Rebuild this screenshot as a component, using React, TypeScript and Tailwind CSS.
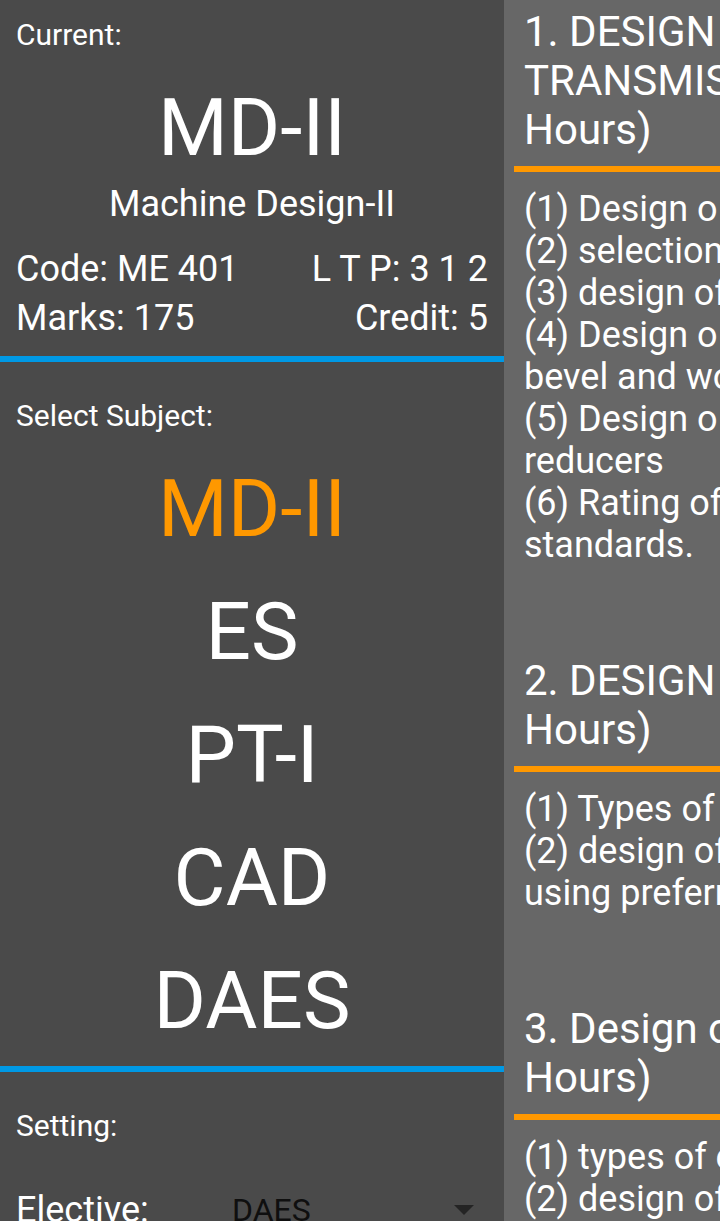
import React from "react";

const subjects = ["MD-II", "ES", "PT-I", "CAD", "DAES"];

const units = [
  {
    title: ["1. DESIGN", "TRANSMISSION", "Hours)"],
    topics: ["(1) Design o", "(2) selection", "(3) design of", "(4) Design o", "bevel and worm", "(5) Design o", "reducers", "(6) Rating of", "standards."],
  },
  {
    title: ["2. DESIGN", "Hours)"],
    topics: ["(1) Types of", "(2) design of", "using preferred"],
  },
  {
    title: ["3. Design of", "Hours)"],
    topics: ["(1) types of engines", "(2) design of"],
  },
];

export default function App() {
  return (
    <div className="flex h-screen overflow-hidden bg-[#676767] font-[Roboto,sans-serif] text-white">
      <aside className="h-full w-[70%] shrink-0 overflow-hidden bg-[#4a4a4a]">
        <section className="border-b-6 border-[#0099e5] px-4 pt-[17px] pb-[13px]">
          <h2 className="text-[30px] leading-9">Current:</h2>
          <h1 className="mt-7 text-center text-[80px] leading-[94px]">MD-II</h1>
          <p className="mt-[7px] text-center text-[36px] leading-[44px]">Machine Design-II</p>
          <div className="mt-[19px] flex justify-between text-[36px] leading-[49px]">
            <span>Code: ME 401</span>
            <span>L T P: 3 1 2</span>
          </div>
          <div className="flex justify-between text-[36px] leading-[49px]">
            <span>Marks: 175</span>
            <span>Credit: 5</span>
          </div>
        </section>
        <nav className="border-b-6 border-[#0099e5] px-4 pt-9 pb-[3px]">
          <h2 className="text-[30px] leading-9">Select Subject:</h2>
          <ul className="mt-[14px]">
            {subjects.map((s, i) => (
              <li key={s}>
                <button className={`block w-full text-center text-[80px] leading-[123px] ${i === 0 ? "text-[#ff9800]" : "text-white"}`}>{s}</button>
              </li>
            ))}
          </ul>
        </nav>
        <section className="px-4 pt-9">
          <h2 className="text-[30px] leading-9">Setting:</h2>
          <div className="mt-9 flex items-center text-[36px] leading-[60px]">
            <label htmlFor="elective" className="w-[200px]">Elective:</label>
            <div className="relative flex-1">
              <select id="elective" className="block w-full appearance-none bg-transparent pl-4 text-[32px] leading-[60px] text-[#0f0f0f]">
                <option>DAES</option>
              </select>
              <svg className="pointer-events-none absolute top-6 right-3 h-3 w-6" viewBox="0 0 24 12">
                <path d="M2 1H22L12 11Z" fill="#242424" />
              </svg>
            </div>
          </div>
        </section>
      </aside>
      <main className="min-w-0 flex-1 overflow-hidden pt-[7px] pl-[10px]">
        {units.map((u) => (
          <article key={u.title[0]} className="mb-[90px] whitespace-nowrap">
            <h3 className="border-b-6 border-[#ff9800] pb-3 pl-[10px] text-[42px] leading-[49px]">
              {u.title.map((t) => <span key={t} className="block">{t}</span>)}
            </h3>
            <div className="pt-4 pl-[10px] text-[36px] leading-[42px]">
              {u.topics.map((t) => <p key={t}>{t}</p>)}
            </div>
          </article>
        ))}
      </main>
    </div>
  );
}
